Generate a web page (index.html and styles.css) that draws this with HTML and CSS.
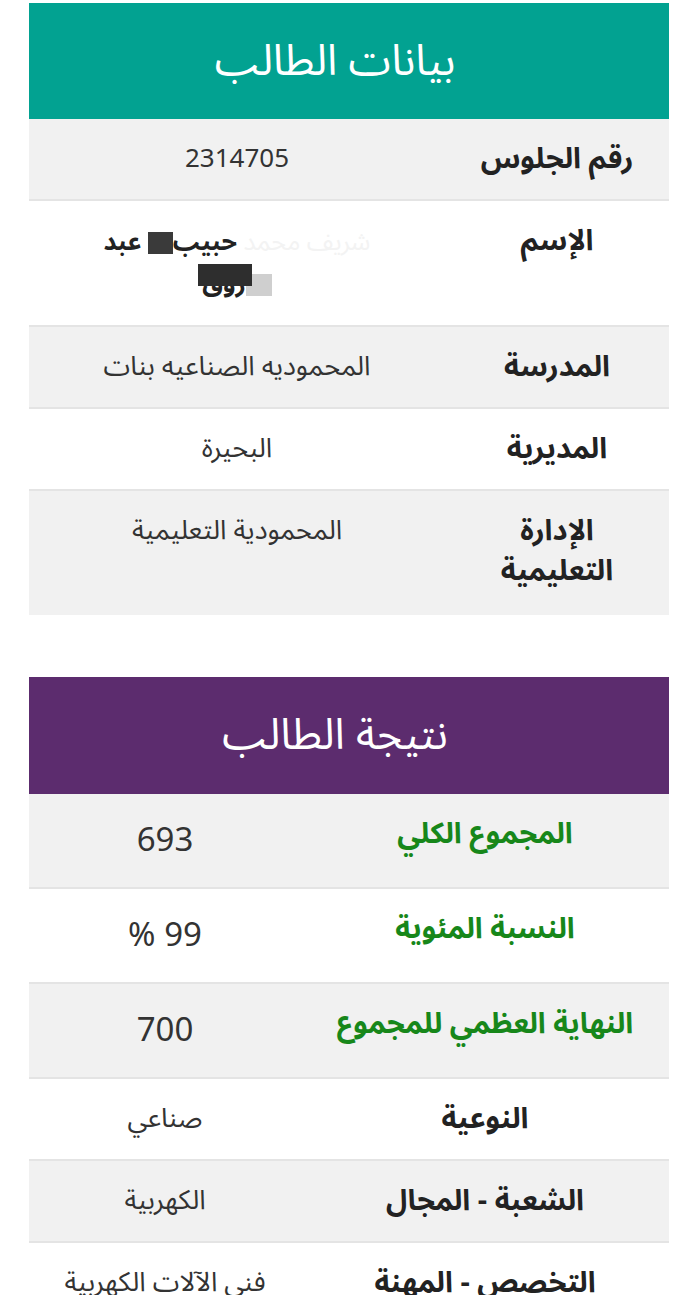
FILE: index.html
```html
<!DOCTYPE html>
<html lang="ar" dir="rtl">
<head>
<meta charset="utf-8">
<title>نتيجة الطالب</title>
<link rel="stylesheet" href="styles.css">
</head>
<body>
<main class="page">
  <section class="card">
    <h2 class="card-title teal">بيانات الطالب</h2>
    <table class="info info-student">
      <tr class="gray"><th>رقم الجلوس</th><td class="num">2314705</td></tr>
      <tr>
        <th>الإسم</th>
        <td class="name">
          <div class="name-line"><span class="faint">شريف محمد</span> <span>حبيب</span><span class="blk dark"></span> <span>عبد</span></div>
          <div class="name-line"><span class="blk light"></span><span class="masked">روق</span></div>
        </td>
      </tr>
      <tr class="gray"><th>المدرسة</th><td>المحموديه الصناعيه بنات</td></tr>
      <tr><th>المديرية</th><td>البحيرة</td></tr>
      <tr class="gray last"><th>الإدارة التعليمية</th><td>المحمودية التعليمية</td></tr>
    </table>
  </section>

  <section class="card">
    <h2 class="card-title purple">نتيجة الطالب</h2>
    <table class="info info-result">
      <tr class="gray big"><th class="green">المجموع الكلي</th><td>693</td></tr>
      <tr class="big"><th class="green">النسبة المئوية</th><td>99 %</td></tr>
      <tr class="gray big"><th class="green">النهاية العظمي للمجموع</th><td>700</td></tr>
      <tr><th>النوعية</th><td>صناعي</td></tr>
      <tr class="gray"><th>الشعبة - المجال</th><td>الكهربية</td></tr>
      <tr><th>التخصص - المهنة</th><td>فني الآلات الكهربية</td></tr>
    </table>
  </section>
</main>
</body>
</html>
```

FILE: styles.css
```css
html, body {
  margin: 0;
  padding: 0;
  background: #ffffff;
}

body {
  font-family: "Noto Sans Arabic", "Noto Kufi Arabic", "DejaVu Sans", sans-serif;
  color: #222;
}

.page {
  width: 640px;
  margin: 0 auto;
  padding-top: 3px;
  display: flex;
  flex-direction: column;
  gap: 62px;
}

.card {
  display: flex;
  flex-direction: column;
}

.card-title {
  margin: 0;
  height: 116px;
  padding-right: 28px;
  display: flex;
  align-items: center;
  justify-content: center;
  color: #ffffff;
  font-size: 43px;
  font-weight: 400;
}

.teal { background: #02a291; }
.purple { background: #5c2c6e; height: 117px; }

.info {
  width: 100%;
  border-collapse: collapse;
  table-layout: fixed;
}

.info tr {
  background: #ffffff;
  border-bottom: 2px solid #e4e4e4;
}

.info tr.gray { background: #f1f1f1; }
.info tr.last { border-bottom: 0; }

.info th,
.info td {
  box-sizing: border-box;
  padding: 20px 10px;
  line-height: 40px;
  vertical-align: top;
  text-align: center;
}

.info tr.last th,
.info tr.last td {
  padding-bottom: 24px;
}

.info th {
  padding-left: 24px;
  padding-right: 24px;
  font-size: 29px;
  font-weight: 700;
  color: #222;
}

.info td {
  font-size: 27px;
  font-weight: 400;
  color: #333;
}

.info td.num { font-size: 26px; }

.info-student th { width: 35%; }
.info-result th { width: 57.5%; }

.info tr.big td {
  font-size: 33px;
  line-height: 53px;
}

.info th.green { color: #17871a; }

.info td.name {
  font-size: 25px;
  font-weight: 700;
  color: #222;
}

.name-line {
  height: 42px;
  line-height: 42px;
  white-space: nowrap;
}

.faint { color: #f3f3f3; font-weight: 400; }

.blk {
  display: inline-block;
  vertical-align: middle;
}

.blk.dark {
  width: 25px;
  height: 22px;
  background: #3a3a3a;
}

.blk.light {
  width: 26px;
  height: 22px;
  background: #cfcfcf;
}

.masked {
  position: relative;
  color: #222;
}

.masked::after {
  content: "";
  position: absolute;
  left: -4px;
  right: -6px;
  top: 6px;
  height: 22px;
  background: #2e2e2e;
}
```
